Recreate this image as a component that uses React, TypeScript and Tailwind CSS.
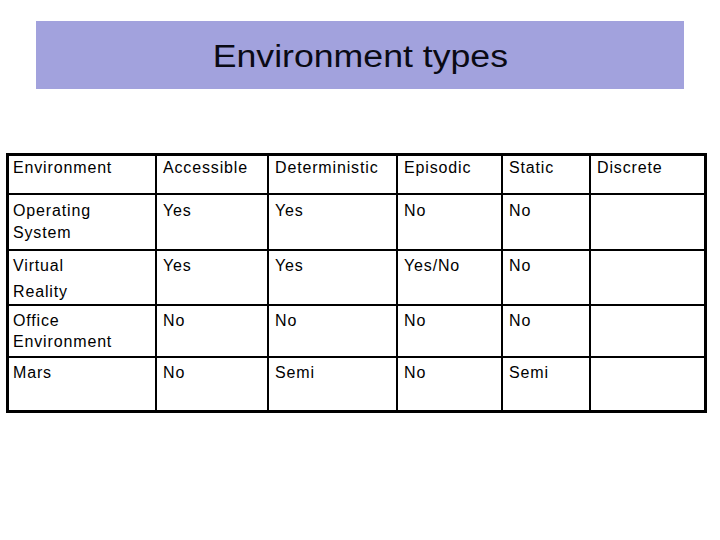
import React from 'react';

// column widths include each cell's right border
const COLS = 'grid grid-cols-[148px_112px_129px_105px_88px_110px]';

const ROWS = [
  {
    cells: ['Environment', 'Accessible', 'Deterministic', 'Episodic', 'Static', 'Discrete'],
    h: 'h-[39px]',
    pad: 'pt-[1px]',
    lead: 'leading-[22px]',
  },
  {
    cells: ['Operating\nSystem', 'Yes', 'Yes', 'No', 'No', ''],
    h: 'h-[56px]',
    pad: 'pt-[5px]',
    lead: 'leading-[22px]',
  },
  {
    cells: ['Virtual\nReality', 'Yes', 'Yes', 'Yes/No', 'No', ''],
    h: 'h-[55px]',
    pad: 'pt-[2px]',
    lead: 'leading-[26px]',
  },
  {
    cells: ['Office\nEnvironment', 'No', 'No', 'No', 'No', ''],
    h: 'h-[52px]',
    pad: 'pt-[4px]',
    lead: 'leading-[21px]',
  },
  {
    cells: ['Mars', 'No', 'Semi', 'No', 'Semi', ''],
    h: 'h-[52px]',
    pad: 'pt-[4px]',
    lead: 'leading-[22px]',
  },
];

export default function App() {
  return (
    <div
      className="w-[720px] h-[540px] bg-white text-black overflow-hidden"
      style={{ fontFamily: '"Liberation Sans", Arial, sans-serif' }}
    >
      <div className="pt-[21px] pl-[36px]">
        <div className="w-[648px] h-[68px] bg-[#a2a2dd] flex items-center justify-center pt-[5px]">
          <h1 className="text-[31px] font-normal text-[#0a0a14] scale-x-[1.15] origin-center">Environment types</h1>
        </div>
      </div>

      <div className="mt-[64px] ml-[6px] w-[701px] border-[3px] border-black">
        {ROWS.map((row, ri) => (
          <div
            key={ri}
            className={`${COLS} ${row.h} ${ri < ROWS.length - 1 ? 'border-b-2 border-black' : ''}`}
          >
            {row.cells.map((cell, ci) => (
              <div
                key={ci}
                className={`${ci < 5 ? 'border-r-2 border-black' : ''} ${ci === 0 ? 'pl-[4px]' : 'pl-[6px]'} ${row.pad} ${row.lead} text-[16px] tracking-[0.85px] pr-1 whitespace-pre-line`}
              >
                {cell}
              </div>
            ))}
          </div>
        ))}
      </div>
    </div>
  );
}
